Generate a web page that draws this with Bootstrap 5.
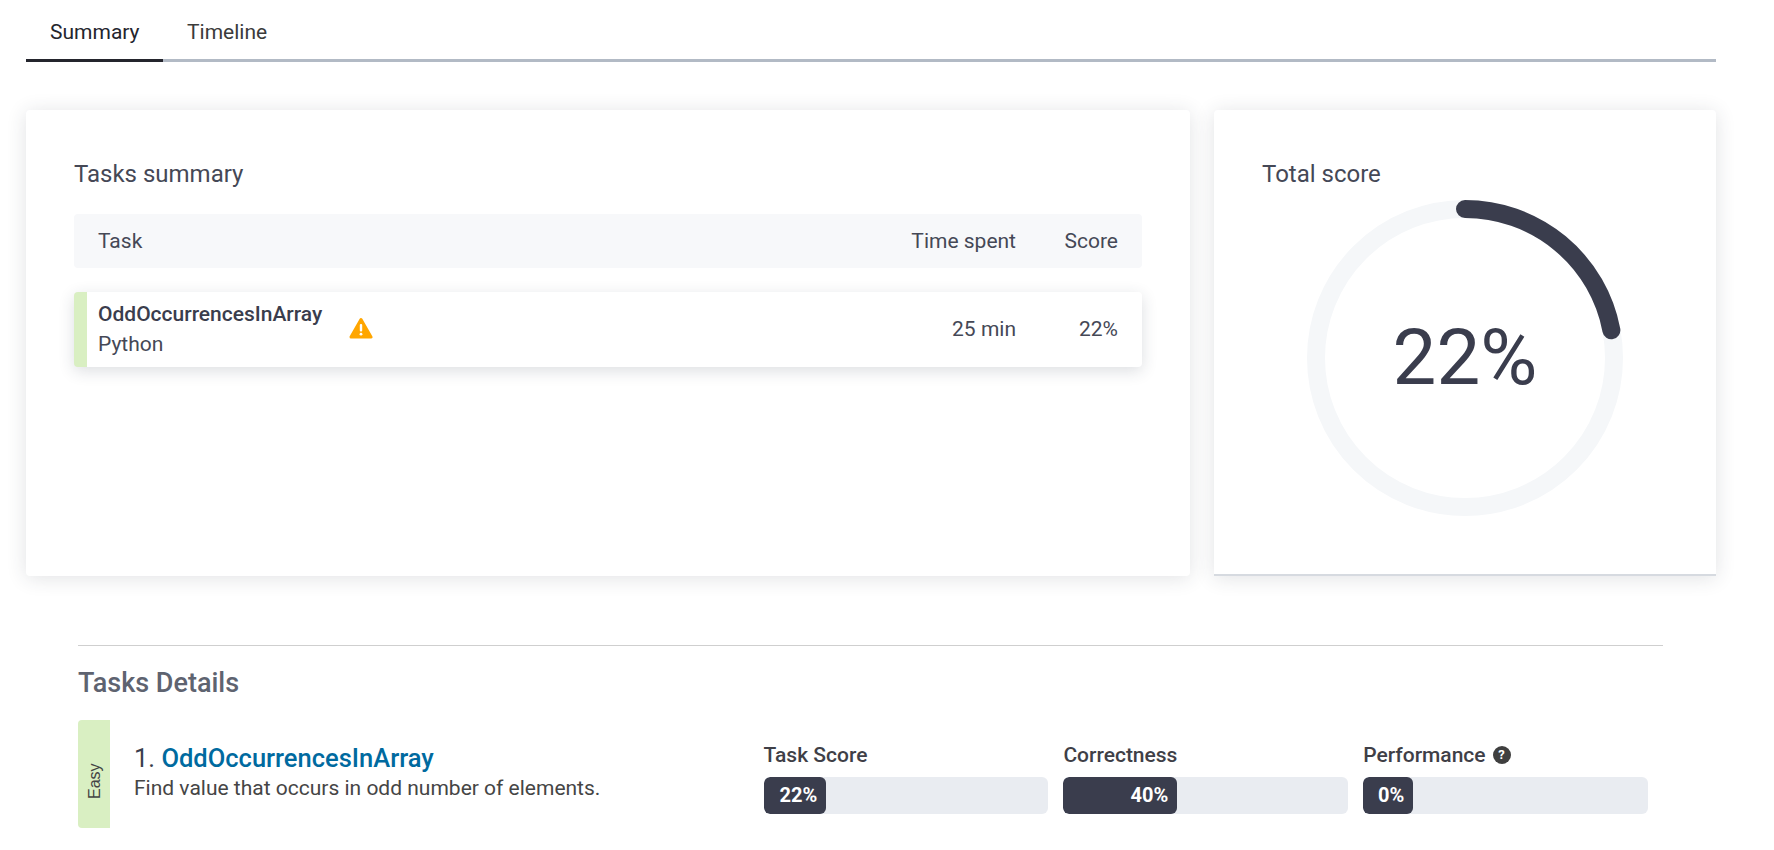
<!DOCTYPE html>
<html lang="en">
<head>
  <meta charset="UTF-8">
  <meta name="viewport" content="width=device-width, initial-scale=1.0">
  <title>Summary</title>
  <link rel="stylesheet" href="https://cdn.jsdelivr.net/npm/bootstrap@5.3.0/dist/css/bootstrap.min.css">
  <style>
    body {
      font-family: Roboto, "Liberation Sans", sans-serif;
      color: #3a3d4d;
      background: #fff;
      overflow: hidden;
    }
    .page-wrap { padding: 0 58px 0 26px; }

    .tab-bar { border-bottom: 3px solid #b2bac5; height: 62px; }
    .tab-bar .nav-link {
      height: 62px;
      margin-bottom: -3px;
      padding: 18px 23.5px 0 24px;
      font-size: 21px;
      line-height: 28px;
      color: #3b3b3b;
      border: 0;
      border-bottom: 3px solid transparent;
      border-radius: 0;
    }
    .tab-bar .nav-link.active { color: #24252d; border-bottom-color: #24252d; }

    .cards-row { margin-top: 48px; gap: 24px; }
    .panel-card {
      height: 466px;
      border: 0;
      border-radius: 4px;
      box-shadow: 0 2px 20px rgba(40, 48, 66, .14);
    }
    .panel-tasks { width: 1164px; padding: 48px; }
    .panel-score { width: 502px; padding: 48px; border-bottom: 2px solid #d6dae0; border-radius: 4px 4px 0 0; }
    .panel-title { font-size: 24px; line-height: 32px; font-weight: 400; margin: 0; color: #454856; }

    .tasks-head {
      height: 54px;
      margin-top: 24px;
      background: #f7f8fa;
      border-radius: 4px;
      font-size: 21px;
      line-height: 30px;
      color: #454856;
    }
    .tasks-row {
      height: 75px;
      margin-top: 24px;
      border-left: 13px solid #d9efc2;
      border-radius: 4px;
      font-size: 21px;
      color: #454856;
      background: #fff;
      box-shadow: 0 4px 16px rgba(40, 48, 66, .16);
    }
    .cell-name { padding-left: 24px; }
    .tasks-row .cell-name { padding-left: 11px; }
    .cell-time { width: 170px; text-align: right; }
    .cell-score { width: 126px; padding-right: 24px; text-align: right; }
    .task-name { font-weight: 500; line-height: 30px; margin-top: -1px; color: #3a3d4d; }
    .task-lang { line-height: 31px; }
    .warn-icon { width: 24px; height: 22px; margin: -3px 0 0 27px; }

    .ring-wrap { width: 316px; height: 316px; margin: 0 auto; }
    .ring-wrap svg { display: block; }
    .ring-value {
      position: absolute;
      inset: 0 0 0 1px;
      font-size: 78px;
      font-weight: 400;
      line-height: 316px;
      text-align: center;
      color: #3a3d4d;
    }
    .ring-area { margin-top: 10px; margin-left: -1px; }

    .details-wrap { margin: 69px 53px 0 52px; border-top: 1px solid #cfcfcf; }
    .details-title { font-size: 27px; line-height: 36px; font-weight: 500; color: #5e6370; margin: 19px 0 19px; }
    .easy-strip {
      width: 32px;
      height: 108px;
      padding-bottom: 14px;
      background: #d9efc2;
      writing-mode: vertical-rl;
      transform: rotate(180deg);
      border-radius: 0 4px 4px 0;
      text-align: center;
      font-family: "Liberation Sans", sans-serif;
      font-size: 16px;
      line-height: 33px;
      color: #444;
    }
    .task-info { width: 654px; padding-left: 24px; padding-bottom: 4px; }
    .task-heading { font-size: 25.5px; line-height: 32px; font-weight: 400; color: #3a3d4d; margin: 0; }
    .task-heading a { color: #006a9f; font-weight: 500; text-decoration: none; }
    .task-desc { font-size: 21px; line-height: 28px; color: #454545; margin: 0; }

    .metric-col { width: 285px; margin-right: 15px; padding-top: 8px; }
    .metric-label { font-size: 21px; line-height: 24px; font-weight: 500; color: #3f3f47; margin-bottom: 10px; }
    .help-dot {
      width: 18px;
      height: 18px;
      margin-left: 7px;
      background: #3f3f3f;
      color: #fff;
      font-size: 13px;
      line-height: 18px;
      font-weight: 700;
      text-align: center;
      border-radius: 50%;
    }
    .metric-bar { height: 37px; background: #e9ecf1; border-radius: 6px; }
    .metric-fill {
      min-width: 50px;
      background: #3a3d4d;
      border-radius: 6px;
      padding-right: 9px;
      text-align: right;
      font-size: 20px;
      font-weight: 700;
      line-height: 37px;
      color: #fff;
      display: block;
    }
  </style>
</head>
<body>
  <div class="page-wrap">
    <ul class="nav tab-bar">
      <li class="nav-item"><a class="nav-link active" href="#">Summary</a></li>
      <li class="nav-item"><a class="nav-link" href="#">Timeline</a></li>
    </ul>

    <div class="d-flex cards-row">
      <div class="card panel-card panel-tasks">
        <h2 class="panel-title">Tasks summary</h2>
        <div class="d-flex align-items-center tasks-head">
          <div class="flex-grow-1 cell-name">Task</div>
          <div class="cell-time">Time spent</div>
          <div class="cell-score">Score</div>
        </div>
        <div class="d-flex align-items-center tasks-row">
          <div class="flex-grow-1 cell-name d-flex align-items-center">
            <div>
              <div class="task-name">OddOccurrencesInArray</div>
              <div class="task-lang">Python</div>
            </div>
            <svg class="warn-icon" viewBox="0 0 24 22">
              <path fill="#ffa600" stroke="#ffa600" stroke-width="3" stroke-linejoin="round" d="M12 2.5 L22 20 H2 Z"/>
              <rect x="10.8" y="7" width="2.4" height="7.5" rx="1" fill="#fff"/>
              <circle cx="12" cy="17.2" r="1.4" fill="#fff"/>
            </svg>
          </div>
          <div class="cell-time">25 min</div>
          <div class="cell-score">22%</div>
        </div>
      </div>

      <div class="card panel-card panel-score">
        <h2 class="panel-title">Total score</h2>
        <div class="ring-area">
          <div class="ring-wrap position-relative">
            <svg width="316" height="316" viewBox="0 0 316 316">
              <circle cx="158" cy="158" r="149" fill="none" stroke="#f5f7f9" stroke-width="18"/>
              <circle cx="158" cy="158" r="149" fill="none" stroke="#3a3d4d" stroke-width="18" stroke-linecap="round"
                      stroke-dasharray="206 936.2" transform="rotate(-90 158 158)"/>
            </svg>
            <div class="ring-value">22%</div>
          </div>
        </div>
      </div>
    </div>

    <div class="details-wrap">
      <h3 class="details-title">Tasks Details</h3>
      <div class="d-flex align-items-center">
        <div class="easy-strip">Easy</div>
        <div class="task-info">
          <h4 class="task-heading">1. <a href="#">OddOccurrencesInArray</a></h4>
          <p class="task-desc">Find value that occurs in odd number of elements.</p>
        </div>
        <div class="metric-col">
          <div class="metric-label">Task Score</div>
          <div class="progress metric-bar"><div class="metric-fill" style="width: 22%">22%</div></div>
        </div>
        <div class="metric-col">
          <div class="metric-label">Correctness</div>
          <div class="progress metric-bar"><div class="metric-fill" style="width: 40%">40%</div></div>
        </div>
        <div class="metric-col">
          <div class="metric-label d-flex align-items-center">Performance <span class="help-dot">?</span></div>
          <div class="progress metric-bar"><div class="metric-fill" style="width: 0%">0%</div></div>
        </div>
      </div>
    </div>
  </div>
  <script src="https://cdn.jsdelivr.net/npm/bootstrap@5.3.0/dist/js/bootstrap.bundle.min.js"></script>
</body>
</html>
